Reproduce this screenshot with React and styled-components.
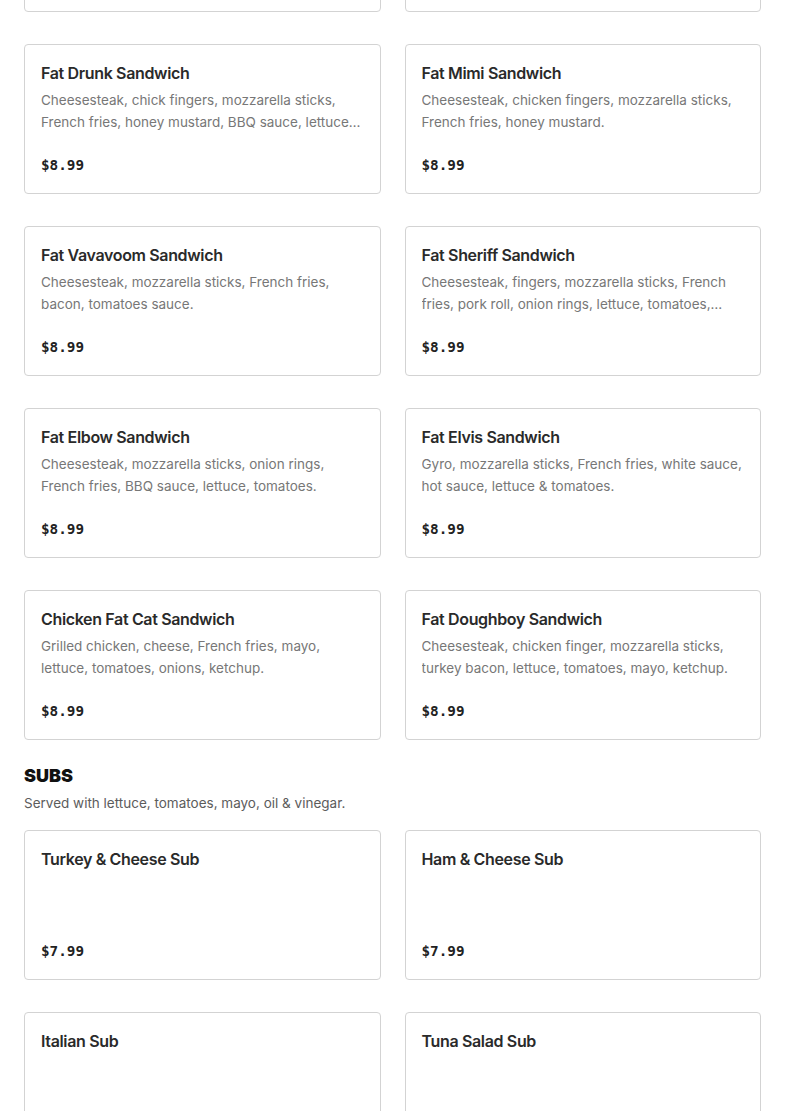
import React from "react";
import styled, { createGlobalStyle } from "styled-components";

const Global = createGlobalStyle`
  html, body { margin: 0; padding: 0; background: #fff; }
  body { font-family: Inter, "Noto Sans", sans-serif; -webkit-font-smoothing: antialiased; }
  * { box-sizing: border-box; }
`;

const Page = styled.main`
  /* simulates the scrolled viewport */
  margin-top: -138px;
  padding: 0 24px;
  display: flex;
  flex-direction: column;
`;

const Grid = styled.div`
  display: grid;
  grid-template-columns: 1fr 1fr;
  column-gap: 24px;
  row-gap: 32px;
`;

const Card = styled.article`
  height: 150px;
  border: 1px solid #d3d3d3;
  border-radius: 4px;
  padding: 16px 16px 17px;
  display: flex;
  flex-direction: column;
  background: #fff;
`;

const Title = styled.h3`
  margin: 0;
  font-size: 16px;
  line-height: 24px;
  font-weight: 600;
  letter-spacing: -0.35px;
  color: #2a2a2a;
`;

const Desc = styled.p`
  margin: 4px 0 0;
  font-size: 13.5px;
  line-height: 22px;
  color: #777;
  display: -webkit-box;
  -webkit-line-clamp: 2;
  -webkit-box-orient: vertical;
  overflow: hidden;
`;

const Price = styled.div`
  margin-top: auto;
  font-family: "DejaVu Sans Mono", "Liberation Mono", monospace;
  font-weight: 700;
  font-size: 14.3px;
  line-height: 22px;
  color: #222;
`;

const Section = styled.section`
  margin-top: 24px;
  display: flex;
  flex-direction: column;
`;

const SectionTitle = styled.h2`
  margin: 0;
  font-size: 18px;
  line-height: 24px;
  font-weight: 900;
  color: #111;
  text-transform: uppercase;
`;

const SectionNote = styled.p`
  margin: 4px 0 16px;
  font-size: 13.5px;
  line-height: 22px;
  color: #5c5c5c;
`;

const sandwiches = [
  { name: "Fat Cat Sandwich", desc: "Cheesesteak, mozzarella sticks, French fries.", price: "$8.99" },
  { name: "Fat Boy Sandwich", desc: "Cheeseburger, chicken fingers, French fries.", price: "$8.99" },
  { name: "Fat Drunk Sandwich", desc: "Cheesesteak, chick fingers, mozzarella sticks, French fries, honey mustard, BBQ sauce, lettuce, tomatoes.", price: "$8.99" },
  { name: "Fat Mimi Sandwich", desc: "Cheesesteak, chicken fingers, mozzarella sticks, French fries, honey mustard.", price: "$8.99" },
  { name: "Fat Vavavoom Sandwich", desc: "Cheesesteak, mozzarella sticks, French fries, bacon, tomatoes sauce.", price: "$8.99" },
  { name: "Fat Sheriff Sandwich", desc: "Cheesesteak, fingers, mozzarella sticks, French fries, pork roll, onion rings, lettuce, tomatoes, mayo.", price: "$8.99" },
  { name: "Fat Elbow Sandwich", desc: "Cheesesteak, mozzarella sticks, onion rings, French fries, BBQ sauce, lettuce, tomatoes.", price: "$8.99" },
  { name: "Fat Elvis Sandwich", desc: "Gyro, mozzarella sticks, French fries, white sauce, hot sauce, lettuce & tomatoes.", price: "$8.99" },
  { name: "Chicken Fat Cat Sandwich", desc: "Grilled chicken, cheese, French fries, mayo, lettuce, tomatoes, onions, ketchup.", price: "$8.99" },
  { name: "Fat Doughboy Sandwich", desc: "Cheesesteak, chicken finger, mozzarella sticks, turkey bacon, lettuce, tomatoes, mayo, ketchup.", price: "$8.99" },
];

const subs = [
  { name: "Turkey & Cheese Sub", price: "$7.99" },
  { name: "Ham & Cheese Sub", price: "$7.99" },
  { name: "Italian Sub", price: "$7.99" },
  { name: "Tuna Salad Sub", price: "$7.99" },
];

function Item({ name, desc, price }) {
  return (
    <Card>
      <Title>{name}</Title>
      {desc && <Desc>{desc}</Desc>}
      <Price>{price}</Price>
    </Card>
  );
}

export default function App() {
  return (
    <>
      <Global />
      <Page>
        <Grid>
          {sandwiches.map((s) => (
            <Item key={s.name} {...s} />
          ))}
        </Grid>
        <Section>
          <SectionTitle>Subs</SectionTitle>
          <SectionNote>Served with lettuce, tomatoes, mayo, oil &amp; vinegar.</SectionNote>
          <Grid>
            {subs.map((s) => (
              <Item key={s.name} {...s} />
            ))}
          </Grid>
        </Section>
      </Page>
    </>
  );
}
